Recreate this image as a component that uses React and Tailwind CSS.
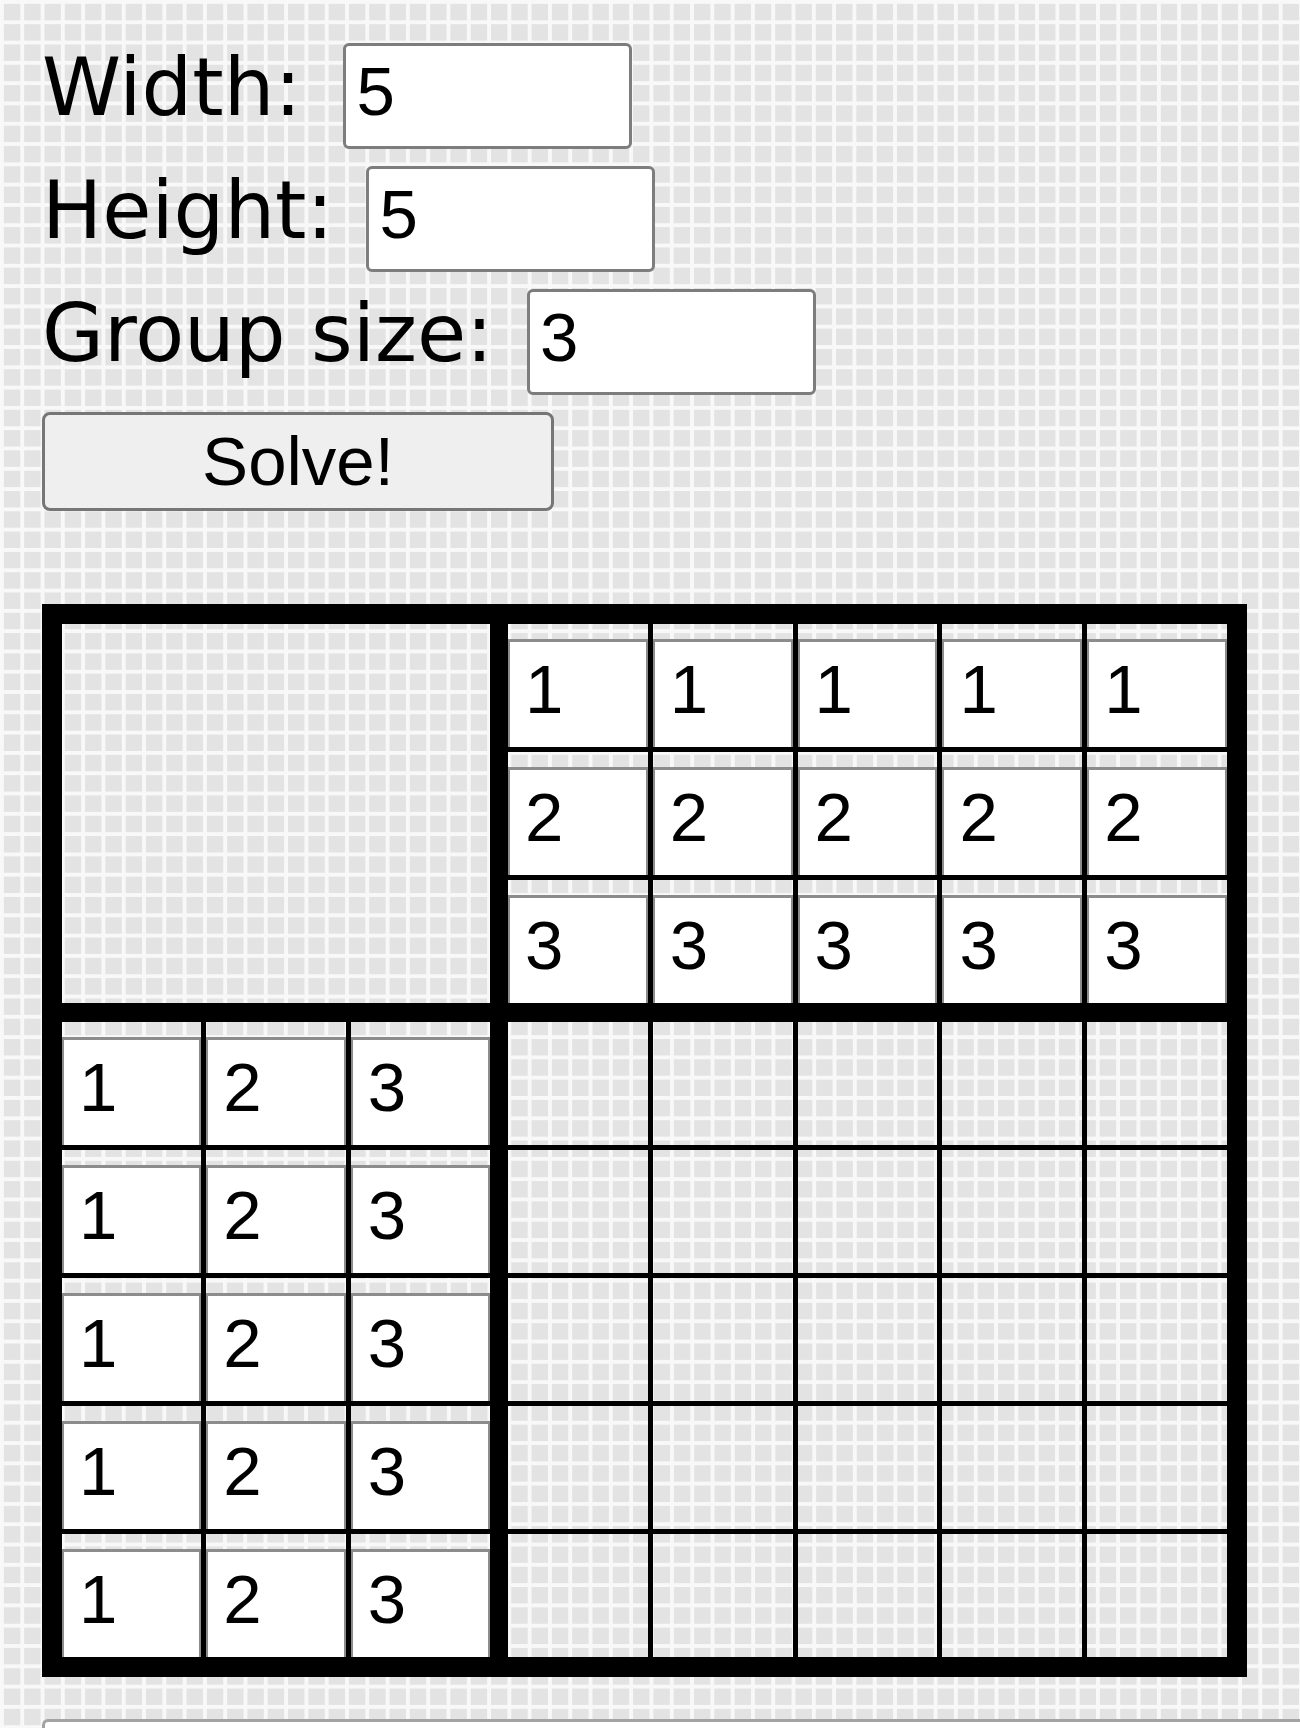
import React from "react";

const PAT =
  "bg-[#e3e3e3] bg-[image:linear-gradient(to_right,#f8f8f8_4px,transparent_4px),linear-gradient(to_bottom,#f8f8f8_4px,transparent_4px)] bg-[length:20.3px_20.3px] bg-fixed";

const ARIAL = "font-['Liberation_Sans',Arial,sans-serif]";
const VERD = "font-['DejaVu_Sans',Verdana,sans-serif]";

function Field({ label, value, ml }) {
  return (
    <div className={`flex items-baseline h-[106px] ${VERD} text-[80px] leading-none text-black`}>
      <span>{label}</span>
      <input
        readOnly
        defaultValue={value}
        className={`${ml} w-[289px] h-[106px] bg-white border-[3px] border-[#7d7d7d] rounded-[6px] pl-[10px] pb-[10px] ${ARIAL} text-[69px] text-black outline-none`}
      />
    </div>
  );
}

function Cell({ v }) {
  return (
    <div className={`${PAT} flex flex-col justify-end`}>
      <input
        readOnly
        defaultValue={v}
        className={`w-full h-[108px] bg-white border-x-[2px] border-t-[3px] border-b-0 border-[#8c8c8c] pl-[15px] pb-[10px] ${ARIAL} text-[69px] text-black outline-none`}
      />
    </div>
  );
}

export default function App() {
  const topRows = [1, 2, 3];
  const cols5 = [0, 1, 2, 3, 4];
  return (
    <div className={`${PAT} w-[1300px] h-[1728px] overflow-hidden pl-[42px] pt-[43px]`}>
      <div className="flex flex-col gap-[17px]">
        <Field label="Width:" value="5" ml="ml-[42px]" />
        <Field label="Height:" value="5" ml="ml-[33px]" />
        <Field label="Group size:" value="3" ml="ml-[34px]" />
        <button
          className={`w-[512px] h-[99px] bg-[#efefef] border-[3px] border-[#767676] rounded-[8px] ${ARIAL} text-[69px] leading-none text-black`}
        >
          Solve!
        </button>
      </div>

      <div className="mt-[93px] w-[1205px] h-[1073px] border-[20px] border-black bg-black grid grid-cols-[428px_1fr] grid-rows-[379px_1fr] gap-x-[18px] gap-y-[19px]">
        <div className={PAT} />
        <div className="grid grid-cols-5 grid-rows-3 gap-[5px] bg-black">
          {topRows.map((r) =>
            cols5.map((c) => <Cell key={`t${r}-${c}`} v={r} />)
          )}
        </div>
        <div className="grid grid-cols-3 grid-rows-5 gap-[5px] bg-black">
          {cols5.map((r) =>
            [1, 2, 3].map((c) => <Cell key={`l${r}-${c}`} v={c} />)
          )}
        </div>
        <div className="grid grid-cols-5 grid-rows-5 gap-[5px] bg-black">
          {cols5.map((r) =>
            cols5.map((c) => <div key={`g${r}-${c}`} className={PAT} />)
          )}
        </div>
      </div>

      <div className="mt-[42px] h-[40px] bg-white border-t-[3px] border-l-[3px] border-[#a3a3a3] rounded-tl-[6px]" />
    </div>
  );
}
